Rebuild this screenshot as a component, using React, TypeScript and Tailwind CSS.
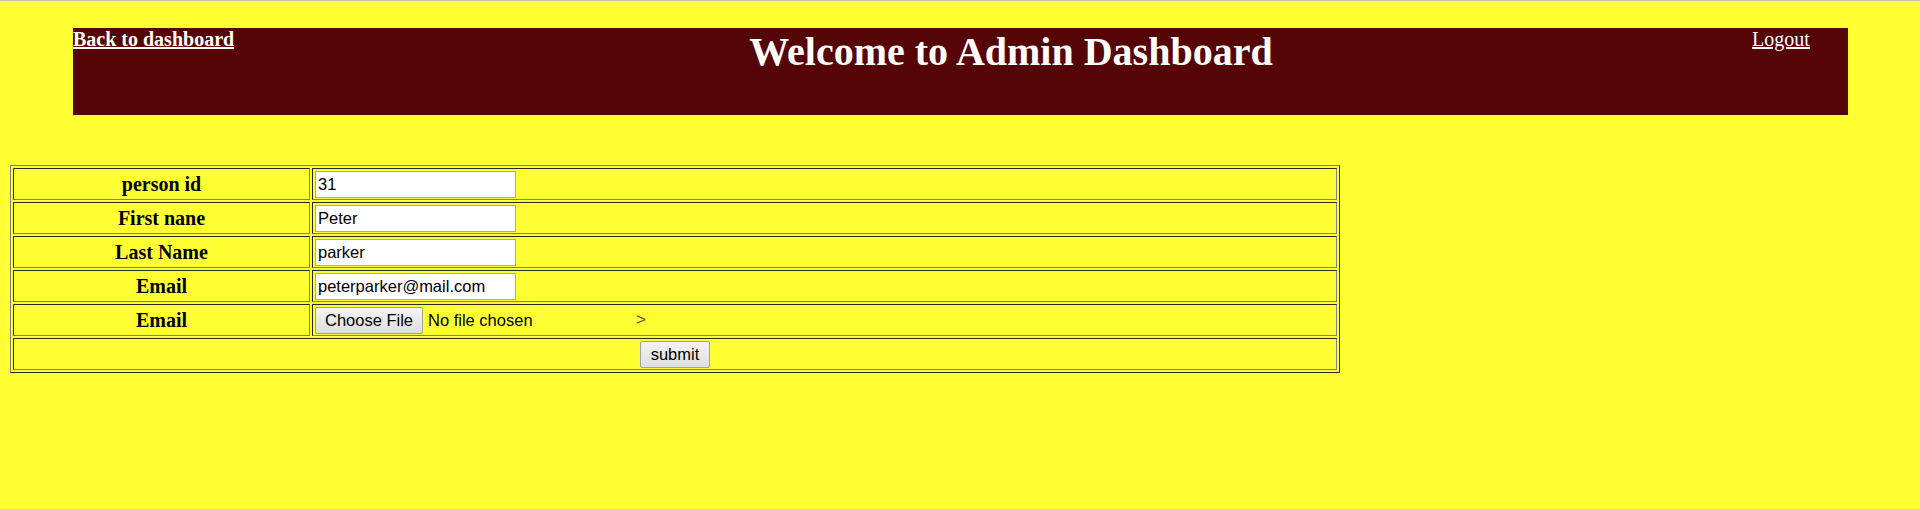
export default function App() {
    const rows = [
        { label: 'person id', value: '31' },
        { label: 'First nane', value: 'Peter' },
        { label: 'Last Name', value: 'parker' },
        { label: 'Email', value: 'peterparker@mail.com' },
    ]
    const cell = 'border border-t-[#282828] border-l-[#282828] border-r-[#808080] border-b-[#808080] p-0 h-[32px]'
    const btn = "inline-flex items-center justify-center h-[27px] border border-[#a0a0a0] rounded-[2px] bg-gradient-to-b from-[#f4f4f4] to-[#dedede] text-[16.5px] text-black font-['Liberation_Sans',Arial,sans-serif]"
    return (
        <div className="min-h-screen w-full bg-[#ffff33] border-t border-[#c0c0c0] font-['Liberation_Serif','Times_New_Roman',serif]">
            <div className="ml-[73px] mt-[27px] w-[1775px] h-[87px] bg-[#550505] flex items-start text-white">
                <div className="w-[235px] text-[20px] leading-[23px] font-bold">
                    <a href="#" className="underline">Back to dashboard</a>
                </div>
                <div className="flex-1 text-center pt-[1px]">
                    <h1 className="text-[40px] leading-[46px] font-bold">Welcome to Admin Dashboard</h1>
                </div>
                <div className="w-[134px] text-center text-[20px] leading-[23px]">
                    <a href="#" className="underline">Logout</a>
                </div>
            </div>

            <div className="pl-[10px] pt-[50px]">
                <form onSubmit={(e) => e.preventDefault()}>
                    <table className="w-[1330px] border-separate border-spacing-[2px] border border-t-[#808080] border-l-[#808080] border-r-[#282828] border-b-[#282828]">
                        <tbody>
                            {rows.map((row, i) => (
                                <tr key={i}>
                                    <th className={`${cell} w-[297px] text-center align-middle text-[20px] font-bold text-black`}>{row.label}</th>
                                    <td className={`${cell} align-middle pl-[2px]`}>
                                        <input
                                            type="text"
                                            defaultValue={row.value}
                                            className="block w-[201px] h-[27px] bg-white border border-[#a9a9a9] px-[2px] text-[16.5px] text-black font-['Liberation_Sans',Arial,sans-serif] outline-none"
                                        />
                                    </td>
                                </tr>
                            ))}
                            <tr>
                                <th className={`${cell} text-center align-middle text-[20px] font-bold text-black`}>Email</th>
                                <td className={`${cell} align-middle pl-[2px]`}>
                                    <div className="flex items-center">
                                        <div className="flex items-center w-[317px]">
                                            <button type="button" className={`${btn} w-[108px]`}>Choose File</button>
                                            <span className="ml-[5px] text-[16.5px] text-black font-['Liberation_Sans',Arial,sans-serif]">No file chosen</span>
                                        </div>
                                        <span className="ml-[4px] text-[17px] text-[#555] font-['Liberation_Sans',Arial,sans-serif]">&gt;</span>
                                    </div>
                                </td>
                            </tr>
                            <tr>
                                <td colSpan={2} className={`${cell} text-center align-middle`}>
                                    <button type="submit" className={`${btn} w-[70px] h-[26px] align-middle`}>submit</button>
                                </td>
                            </tr>
                        </tbody>
                    </table>
                </form>
            </div>
        </div>
    )
}
